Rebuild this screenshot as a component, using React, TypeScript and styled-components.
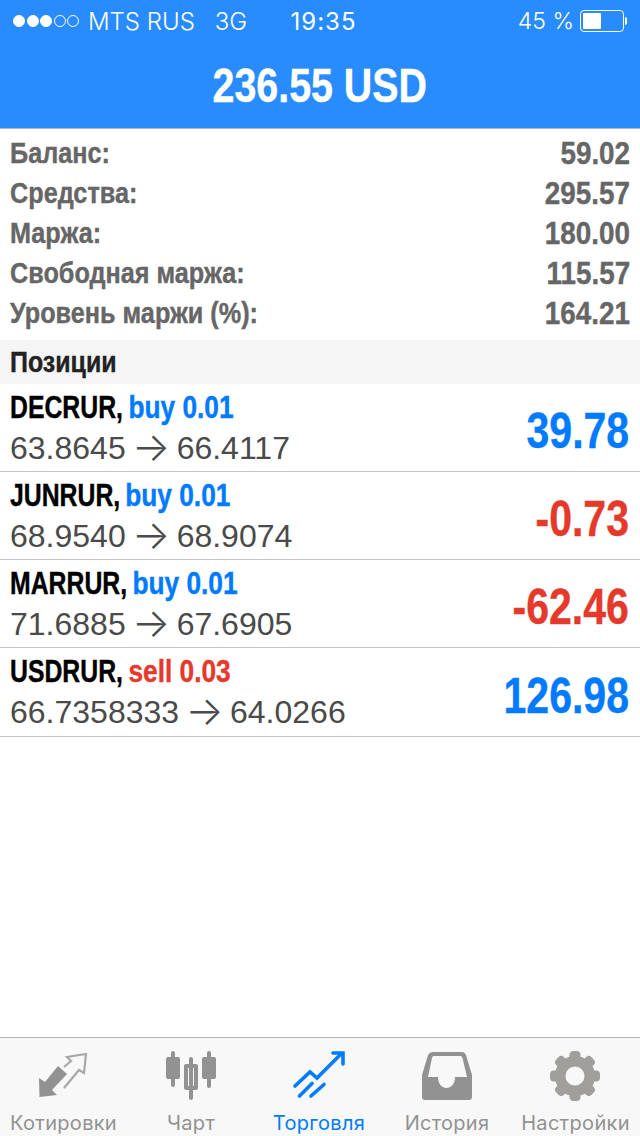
import React from "react";
import styled, { createGlobalStyle } from "styled-components";

const Global = createGlobalStyle`
  html, body { margin: 0; padding: 0; background: #fff; }
  body { font-family: "Liberation Sans", Arial, sans-serif; }
`;

const Page = styled.div`
  width: 640px;
  height: 1136px;
  display: flex;
  flex-direction: column;
  overflow: hidden;
  background: #fff;
`;

const Header = styled.header`
  height: 129px;
  box-sizing: border-box;
  flex: none;
  background: #288cff;
  border-bottom: 1px solid #b4b4b4;
  color: #fff;
  display: flex;
  flex-direction: column;
`;

const StatusBar = styled.div`
  height: 42px;
  display: grid;
  grid-template-columns: 1fr auto 1fr;
  align-items: center;
  padding: 0 12px 0 13px;
  box-sizing: border-box;
  font-family: Inter, sans-serif;
  font-weight: 300;
  font-size: 24px;
`;

const StatusLeft = styled.div`
  display: flex;
  align-items: center;
`;

const Signal = styled.div`
  display: flex;
  gap: 1.5px;
  margin-right: 9px;
`;

const Dot = styled.span<{ $on?: boolean }>`
  width: 12px;
  height: 12px;
  box-sizing: border-box;
  border-radius: 50%;
  border: 1px solid #fff;
  background: ${(p) => (p.$on ? "#fff" : "transparent")};
`;

const Network = styled.span`
  margin-left: 20px;
`;

const Clock = styled.div`
  font-weight: 400;
  letter-spacing: 1px;
  margin-left: 6px;
`;

const StatusRight = styled.div`
  display: flex;
  align-items: center;
  justify-content: flex-end;
  gap: 6px;
  font-size: 23px;
`;

const Battery = styled.div`
  width: 44px;
  height: 22px;
  box-sizing: border-box;
  border: 1px solid #fff;
  border-radius: 4px;
  padding: 2px;
  margin-right: 4px;
  position: relative;
  &::before {
    content: "";
    display: block;
    width: 18px;
    height: 16px;
    background: #fff;
    border-radius: 1px;
  }
  &::after {
    content: "";
    position: absolute;
    right: -4px;
    top: 6px;
    width: 2px;
    height: 8px;
    background: #fff;
    border-radius: 0 2px 2px 0;
  }
`;

const Title = styled.div`
  flex: 1;
  display: flex;
  align-items: center;
  justify-content: center;
`;

const Narrow = styled.span<{ $size: number; $color: string; $right?: boolean; $scale?: number }>`
  display: inline-block;
  font-weight: 700;
  font-size: ${(p) => p.$size}px;
  color: ${(p) => p.$color};
  white-space: nowrap;
  -webkit-text-stroke: 0.4px ${(p) => p.$color};
  transform: scaleX(${(p) => p.$scale ?? 0.82});
  transform-origin: ${(p) => (p.$right ? "right" : "left")} center;
`;

const TitleText = styled(Narrow)`
  transform-origin: center;
`;

const Value = styled(Narrow)`
  margin-top: 4px;
`;

const Summary = styled.section`
  padding: 4px 10px 7px;
  flex: none;
`;

const SummaryRow = styled.div`
  height: 40px;
  display: flex;
  justify-content: space-between;
  align-items: center;
`;

const SectionHead = styled.div`
  height: 44px;
  flex: none;
  background: #f5f5f5;
  padding: 0 10px;
  display: flex;
  align-items: center;
`;

const Position = styled.div<{ $tall?: boolean }>`
  height: ${(p) => (p.$tall ? 89 : 88)}px;
  box-sizing: border-box;
  flex: none;
  padding: 3px 11px 0 10px;
  border-bottom: 1px solid #c4c4c4;
  display: flex;
  justify-content: space-between;
  align-items: center;
`;

const PositionInfo = styled.div`
  display: flex;
  flex-direction: column;
`;

const Symbol = styled.div`
  height: 36px;
  line-height: 36px;
  font-size: 31px;
  font-weight: 700;
  white-space: nowrap;
  transform: scaleX(0.8);
  transform-origin: left center;
  -webkit-text-stroke: 0.4px currentColor;
  color: #000;
`;

const Side = styled.span<{ $color: string }>`
  display: inline-block;
  color: ${(p) => p.$color};
  margin-left: -2px;
  transform: scaleX(1.06);
  transform-origin: left center;
`;

const Prices = styled.div`
  font-size: 32px;
  line-height: 42px;
  padding-top: 1px;
  color: #4a4a4a;
  white-space: nowrap;
`;

const Arrow = styled.span`
  font-family: Inter, sans-serif;
  font-weight: 300;
  font-size: 40px;
  line-height: 0;
  margin: 0 -2.500px;
  vertical-align: -2px;
`;

const Spacer = styled.div`
  flex: 1;
`;

const TabBar = styled.nav`
  height: 99px;
  flex: none;
  box-sizing: border-box;
  background: #f8f8f8;
  border-top: 1px solid #b4b4b4;
  display: grid;
  grid-template-columns: 127px 128px 128px 128px 129px;
`;

const Tab = styled.div<{ $active?: boolean }>`
  display: flex;
  flex-direction: column;
  align-items: center;
  color: ${(p) => (p.$active ? "#007aff" : "#929292")};
  font-family: Inter, sans-serif;
  font-size: 20px;
  letter-spacing: 0.3px;
  svg { display: block; width: 65px; height: 60px; margin-top: 7px; flex: none; }
`;

const TabLabel = styled.span`
  line-height: 24px;
  margin-top: 6px;
  white-space: nowrap;
`;

const QuotesIcon = () => (
  <svg viewBox="0 0 65 60">
    <path fill="#929292" d="M8 33 8.500 52 26 50l-5-5 15-16-9-8-13 16z" />
    <path
      fill="none"
      stroke="#a8a8a8"
      strokeWidth="2.200"
      d="M33 22l7-6-4-4 19-3-2 19-5-3-15 18"
    />
  </svg>
);

const ChartIcon = () => (
  <svg viewBox="0 0 65 60" fill="#929292">
    <rect x="12" y="6" width="4" height="36" rx="2" />
    <rect x="7" y="12" width="14" height="22" rx="2" />
    <rect x="30" y="12" width="4" height="43" rx="2" />
    <path
      fillRule="evenodd"
      d="M27 19h10a2 2 0 0 1 2 2v22a2 2 0 0 1-2 2H27a2 2 0 0 1-2-2V21a2 2 0 0 1 2-2zm2 4v18h6V23z"
    />
    <rect x="48" y="6" width="4" height="37" rx="2" />
    <rect x="43" y="12" width="14" height="22" rx="2" />
  </svg>
);

const TradeIcon = () => (
  <svg viewBox="0 0 65 60" fill="none" stroke="#007aff" strokeWidth="3.600" strokeLinecap="round">
    <path d="M8 41 23 27l7 6L53 10" />
    <path d="M46 8h10v11" />
    <path d="M12.500 51 25 38.500" />
    <path d="M24 51 37 39.500" />
  </svg>
);

const HistoryIcon = () => (
  <svg viewBox="0 0 65 60">
    <path
      fill="#929292"
      fillRule="evenodd"
      d="M18 7h29c2 0 3 1 4 3l6 20v22c0 2-1 3-3 3H10c-2 0-3-1-3-3V30l6-20c1-2 3-3 5-3zm1 4c-1 0-1.500.5-2 2l-4 19h10c0 7 4 11 8.500 11S40 39 40 32h12l-4.500-19c-.5-1.500-1.500-2-2.500-2z"
    />
  </svg>
);

const GearIcon = () => (
  <svg viewBox="0 0 65 60" fill="#a09f9c">
    <circle cx="32" cy="31" r="14.800" fill="none" stroke="#a09f9c" strokeWidth="10.500" />
    {[0, 45, 90, 135, 180, 225, 270, 315].map((a) => (
      <rect key={a} x="26.500" y="6" width="11" height="12" rx="4" transform={`rotate(${a} 32 31)`} />
    ))}
  </svg>
);

const summary = [
  ["Баланс:", "59.02"],
  ["Средства:", "295.57"],
  ["Маржа:", "180.00"],
  ["Свободная маржа:", "115.57"],
  ["Уровень маржи (%):", "164.21"],
];

const BLUE = "#007aff";
const RED = "#e5392b";

const positions = [
  { sym: "DECRUR,", side: "buy 0.01", from: "63.8645", to: "66.4117", value: "39.78", color: BLUE },
  { sym: "JUNRUR,", side: "buy 0.01", from: "68.9540", to: "68.9074", value: "-0.73", color: RED },
  { sym: "MARRUR,", side: "buy 0.01", from: "71.6885", to: "67.6905", value: "-62.46", color: RED },
  { sym: "USDRUR,", side: "sell 0.03", from: "66.7358333", to: "64.0266", value: "126.98", color: BLUE },
];

export default function App() {
  return (
    <Page>
      <Global />
      <Header>
        <StatusBar>
          <StatusLeft>
            <Signal>
              <Dot $on />
              <Dot $on />
              <Dot $on />
              <Dot />
              <Dot />
            </Signal>
            <span>MTS RUS</span>
            <Network>3G</Network>
          </StatusLeft>
          <Clock>19:35</Clock>
          <StatusRight>
            <span>45 %</span>
            <Battery />
          </StatusRight>
        </StatusBar>
        <Title>
          <TitleText $size={48} $color="#fff">236.55 USD</TitleText>
        </Title>
      </Header>
      <Summary>
        {summary.map(([k, v]) => (
          <SummaryRow key={k}>
            <Narrow $size={29} $color="#666" $scale={0.87}>{k}</Narrow>
            <Narrow $size={32} $color="#666" $scale={0.87} $right>{v}</Narrow>
          </SummaryRow>
        ))}
      </Summary>
      <SectionHead>
        <Narrow $size={29} $color="#222" $scale={0.86}>Позиции</Narrow>
      </SectionHead>
      {positions.map((p, i) => (
        <Position key={p.sym} $tall={i === 3}>
          <PositionInfo>
            <Symbol>
              {p.sym} <Side $color={p.side.startsWith("buy") ? BLUE : RED}>{p.side}</Side>
            </Symbol>
            <Prices>{p.from} <Arrow>→</Arrow> {p.to}</Prices>
          </PositionInfo>
          <Value $size={50} $color={p.color} $right>{p.value}</Value>
        </Position>
      ))}
      <Spacer />
      <TabBar>
        <Tab><QuotesIcon /><TabLabel>Котировки</TabLabel></Tab>
        <Tab><ChartIcon /><TabLabel>Чарт</TabLabel></Tab>
        <Tab $active><TradeIcon /><TabLabel>Торговля</TabLabel></Tab>
        <Tab><HistoryIcon /><TabLabel>История</TabLabel></Tab>
        <Tab><GearIcon /><TabLabel>Настройки</TabLabel></Tab>
      </TabBar>
    </Page>
  );
}
